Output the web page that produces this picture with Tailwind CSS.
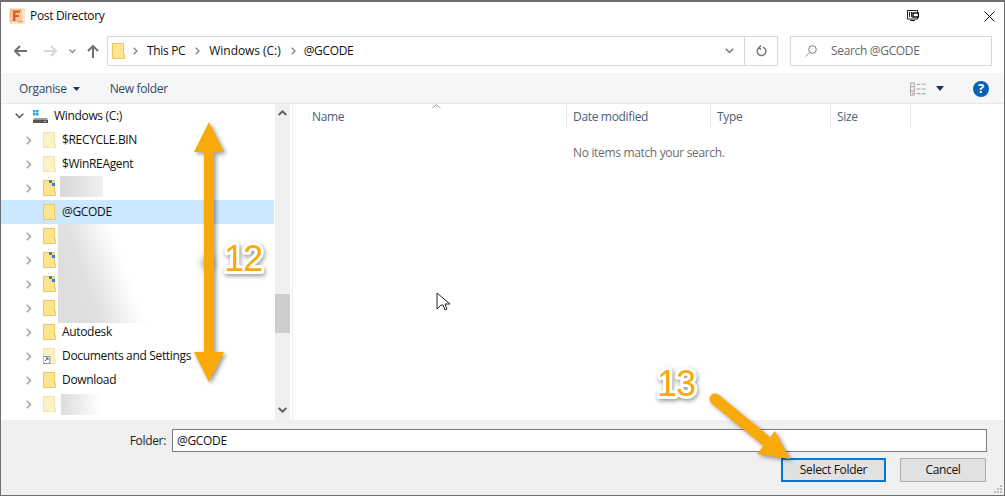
<!DOCTYPE html>
<html><head><meta charset="utf-8"><script src="https://cdn.jsdelivr.net/npm/@tailwindcss/browser@4"></script></head>
<body class="m-0 bg-white">
<div class="relative w-[1005px] h-[496px] overflow-hidden bg-white border border-t-2 border-[#6e6e6e] font-['Open_Sans',sans-serif] text-[12px] tracking-[-0.33px] text-[#111] flex flex-col">
  <!-- title -->
  <div class="h-[32px] shrink-0 flex items-center pl-[8px] pr-[9px] pb-[4px]">
    <svg width="16" height="16" viewBox="0 0 16 16"><rect width="16" height="16" fill="#fbe3cd"/><rect x="1" y="1" width="12" height="13" fill="#f6c39a"/><path d="M4 2.500h7v2.200H6.500v2.300h3.500v2H6.500v4H4z" fill="#d8651d"/><rect x="9" y="13" width="5" height="1.500" fill="#eea46c"/></svg>
    <span class="ml-[5px] text-[#111]">Post Directory</span>
    <svg class="ml-auto mr-[65px]" width="12" height="12" viewBox="0 0 12 12"><rect x="0.500" y="0.500" width="10" height="8.500" fill="none" stroke="#222"/><path d="M2.500 2v5M4.500 2v5" stroke="#222"/><rect x="6" y="3" width="5.500" height="4" fill="#fff" stroke="#000" stroke-width="1.400"/><path d="M3 10.500h5" stroke="#222"/></svg>
    <svg width="11" height="11" viewBox="0 0 11 11"><path d="M.5.500l10 10M10.500.500l-10 10" stroke="#111" stroke-width="1"/></svg>
  </div>
  <!-- nav -->
  <div class="h-[39px] shrink-0 flex items-start pt-[2px]">
    <div class="w-[106px] h-[30px] flex items-center">
      <svg class="ml-[13px]" width="13" height="12" viewBox="0 0 13 12"><path d="M6 1L1 6l5 5M1 6h12" fill="none" stroke="#6f6f6f" stroke-width="2"/></svg>
      <svg class="ml-[17px]" width="13" height="12" viewBox="0 0 13 12"><path d="M7 1l5 5-5 5M12 6H0" fill="none" stroke="#d8d8d8" stroke-width="2"/></svg>
      <svg class="ml-[12px]" width="7" height="5" viewBox="0 0 7 5"><path d="M.5.500l3 3 3-3" fill="none" stroke="#8a8a8a" stroke-width="1.300"/></svg>
      <svg class="ml-[11px]" width="12" height="13" viewBox="0 0 12 13"><path d="M1 6l5-5 5 5M6 1v12" fill="none" stroke="#6f6f6f" stroke-width="2"/></svg>
    </div>
    <div class="w-[671px] h-[30px] border border-[#d9d9d9] flex items-center">
      <svg class="ml-[4px]" width="13" height="16" viewBox="0 0 13 16"><path d="M.500.500h11v11h1v4H.500z" fill="#fde68f" stroke="#eec75b"/></svg>
      <svg class="ml-[8px]" width="5" height="8" viewBox="0 0 5 8"><path d="M.700.700L4 4 .700 7.300" fill="none" stroke="#808080" stroke-width="1.300"/></svg>
      <span class="ml-[9px]">This PC</span>
      <svg class="ml-[10px]" width="5" height="8" viewBox="0 0 5 8"><path d="M.700.700L4 4 .700 7.300" fill="none" stroke="#808080" stroke-width="1.300"/></svg>
      <span class="ml-[9px] tracking-[-0.05px]">Windows (C:)</span>
      <svg class="ml-[10px]" width="5" height="8" viewBox="0 0 5 8"><path d="M.700.700L4 4 .700 7.300" fill="none" stroke="#808080" stroke-width="1.300"/></svg>
      <span class="ml-[8px]">@GCODE</span>
      <svg class="ml-auto mr-[10px]" width="9" height="6" viewBox="0 0 9 6"><path d="M.700.700l3.800 3.800L8.300.700" fill="none" stroke="#777" stroke-width="1.500"/></svg>
      <div class="w-[33px] h-full border-l border-[#d9d9d9] flex items-center justify-center">
        <svg width="11" height="12" viewBox="0 0 11 12"><path d="M3.500 2.500A4.300 4.300 0 1 0 7 2.200M5 .500L3 2.500l2 2" fill="none" stroke="#777" stroke-width="1.500"/></svg>
      </div>
    </div>
    <div class="ml-[12px] w-[202px] h-[30px] border border-[#d9d9d9] flex items-center text-[#666]">
      <svg class="ml-[14px]" width="12" height="12" viewBox="0 0 12 12"><circle cx="7.500" cy="4.500" r="3.800" fill="none" stroke="#777"/><path d="M4.800 7.200L.500 11.500" stroke="#a88"/></svg>
      <span class="ml-[14px]">Search @GCODE</span>
    </div>
  </div>
  <!-- toolbar -->
  <div class="h-[30px] shrink-0 bg-[#f5f6f7] flex items-center pl-[18px] pt-px text-[#34475f]">
    <span>Organise</span>
    <svg class="ml-[6px]" width="7" height="4" viewBox="0 0 7 4"><path d="M0 0h7L3.500 4z" fill="#1d3557"/></svg>
    <span class="ml-[30px]">New folder</span>
    <svg class="ml-auto" width="16" height="14" viewBox="0 0 17 14"><path d="M.500.500h4v13h-4zM.500 4.500h4M.500 9h4" fill="none" stroke="#a0a0a0"/><path d="M7 2h4M12.500 2h4M7 7h4M12.500 7h4M7 12h4M12.500 12h4" stroke="#9a9a9a"/><rect x="2" y="11" width="1" height="1" fill="#d33"/></svg>
    <svg class="ml-[10px]" width="8" height="5" viewBox="0 0 8 5"><path d="M0 0h8L4 5z" fill="#1d3557"/></svg>
    <div class="ml-[29px] mr-[15px] w-[16px] h-[16px] rounded-full bg-[#0a62b8] text-white flex items-center justify-center text-[13px] font-bold">?</div>
  </div>
  <div class="h-px shrink-0 bg-[#e8e8e8]"></div>
  <!-- main -->
  <div class="h-[316px] shrink-0 flex">
    <div class="w-[273px] flex flex-col">
      <div class="h-6 flex items-center"><svg class="ml-[14px]" width="9" height="6" viewBox="0 0 9 6"><path d="M.700.700l3.800 3.800L8.300.700" fill="none" stroke="#555" stroke-width="1.500"/></svg>
        <svg class="ml-[9px]" width="15" height="14" viewBox="0 0 15 14"><path d="M0 1h2.500v2.500H0zM3 1h2.500v2.500H3zM0 4h2.500v2.500H0zM3 4h2.500v2.500H3z" fill="#19a9e8"/><path d="M1 9h13l1 2v3H0v-3z" fill="#9a9a9a"/><path d="M0 11h15v3H0z" fill="#555"/><rect x="11" y="12" width="2" height="1" fill="#7d7"/></svg>
        <span class="ml-[6px]">Windows (C:)</span></div>
      <div class="h-6 flex items-center"><svg class="ml-[25px]" width="6" height="9" viewBox="0 0 6 9"><path d="M.700.700l3.800 3.800L.700 8.300" fill="none" stroke="#a6a6a6" stroke-width="1.500"/></svg>
        <svg class="ml-[11px] opacity-50" width="13" height="16" viewBox="0 0 13 16"><path d="M.500.500h11v11h1v4H.500z" fill="#fde68f" stroke="#eec75b"/></svg>
        <span class="ml-[6px]">$RECYCLE.BIN</span></div>
      <div class="h-6 flex items-center"><svg class="ml-[25px]" width="6" height="9" viewBox="0 0 6 9"><path d="M.700.700l3.800 3.800L.700 8.300" fill="none" stroke="#a6a6a6" stroke-width="1.500"/></svg>
        <svg class="ml-[11px] opacity-50" width="13" height="16" viewBox="0 0 13 16"><path d="M.500.500h11v11h1v4H.500z" fill="#fde68f" stroke="#eec75b"/></svg>
        <span class="ml-[6px]">$WinREAgent</span></div>
      <div class="h-6 flex items-center"><svg class="ml-[25px]" width="6" height="9" viewBox="0 0 6 9"><path d="M.700.700l3.800 3.800L.700 8.300" fill="none" stroke="#a6a6a6" stroke-width="1.500"/></svg>
        <svg class="ml-[11px]" width="13" height="16" viewBox="0 0 13 16"><path d="M.500.500h11v11h1v4H.500z" fill="#fde68f" stroke="#eec75b"/><path d="M6 0h3v3H6zM9 3h3v3H9z" fill="#2f80c8"/></svg>
        <div class="ml-[4px] w-[43px] h-[21px] -mt-[4px] bg-linear-to-r from-[#d8d8d8] to-[#efefef]"></div></div>
      <div class="h-6 flex items-center bg-[#cce8ff]"><svg class="ml-[42px]" width="13" height="16" viewBox="0 0 13 16"><path d="M.500.500h11v11h1v4H.500z" fill="#fde68f" stroke="#eec75b"/></svg>
        <span class="ml-[6px]">@GCODE</span></div>
      <div class="relative h-6 flex items-center"><svg class="ml-[25px]" width="6" height="9" viewBox="0 0 6 9"><path d="M.700.700l3.800 3.800L.700 8.300" fill="none" stroke="#a6a6a6" stroke-width="1.500"/></svg>
        <svg class="ml-[11px]" width="13" height="16" viewBox="0 0 13 16"><path d="M.500.500h11v11h1v4H.500z" fill="#fde68f" stroke="#eec75b"/></svg></div>
      <div class="h-6 flex items-center"><svg class="ml-[25px]" width="6" height="9" viewBox="0 0 6 9"><path d="M.700.700l3.800 3.800L.700 8.300" fill="none" stroke="#a6a6a6" stroke-width="1.500"/></svg>
        <svg class="ml-[11px]" width="13" height="16" viewBox="0 0 13 16"><path d="M.500.500h11v11h1v4H.500z" fill="#fde68f" stroke="#eec75b"/><path d="M6 0h3v3H6zM9 3h3v3H9z" fill="#2f80c8"/></svg></div>
      <div class="h-6 flex items-center"><svg class="ml-[25px]" width="6" height="9" viewBox="0 0 6 9"><path d="M.700.700l3.800 3.800L.700 8.300" fill="none" stroke="#a6a6a6" stroke-width="1.500"/></svg>
        <svg class="ml-[11px]" width="13" height="16" viewBox="0 0 13 16"><path d="M.500.500h11v11h1v4H.500z" fill="#fde68f" stroke="#eec75b"/><path d="M6 0h3v3H6zM9 3h3v3H9z" fill="#2f80c8"/></svg></div>
      <div class="h-6 flex items-center"><svg class="ml-[25px]" width="6" height="9" viewBox="0 0 6 9"><path d="M.700.700l3.800 3.800L.700 8.300" fill="none" stroke="#a6a6a6" stroke-width="1.500"/></svg>
        <svg class="ml-[11px]" width="13" height="16" viewBox="0 0 13 16"><path d="M.500.500h11v11h1v4H.500z" fill="#fde68f" stroke="#eec75b"/></svg></div>
      <div class="h-6 flex items-center"><svg class="ml-[25px]" width="6" height="9" viewBox="0 0 6 9"><path d="M.700.700l3.800 3.800L.700 8.300" fill="none" stroke="#a6a6a6" stroke-width="1.500"/></svg>
        <svg class="ml-[11px]" width="13" height="16" viewBox="0 0 13 16"><path d="M.500.500h11v11h1v4H.500z" fill="#fde68f" stroke="#eec75b"/></svg>
        <span class="ml-[6px]">Autodesk</span></div>
      <div class="h-6 flex items-center"><svg class="ml-[25px]" width="6" height="9" viewBox="0 0 6 9"><path d="M.700.700l3.800 3.800L.700 8.300" fill="none" stroke="#a6a6a6" stroke-width="1.500"/></svg>
        <svg class="ml-[11px]" width="13" height="16" viewBox="0 0 13 16"><path d="M.500.500h11v11h1v4H.500z" fill="#fde68f" stroke="#eec75b" opacity=".5"/><rect x="-0" y="8.500" width="7" height="7" fill="#fff" stroke="#8d8d8d"/><path d="M2 13l3-3M3 10h2v2" stroke="#1f5fb0" fill="none"/></svg>
        <span class="ml-[6px]">Documents and Settings</span></div>
      <div class="h-6 flex items-center"><svg class="ml-[25px]" width="6" height="9" viewBox="0 0 6 9"><path d="M.700.700l3.800 3.800L.700 8.300" fill="none" stroke="#a6a6a6" stroke-width="1.500"/></svg>
        <svg class="ml-[11px]" width="13" height="16" viewBox="0 0 13 16"><path d="M.500.500h11v11h1v4H.500z" fill="#fde68f" stroke="#eec75b"/></svg>
        <span class="ml-[6px]">Download</span></div>
      <div class="h-6 flex items-center"><svg class="ml-[25px]" width="6" height="9" viewBox="0 0 6 9"><path d="M.700.700l3.800 3.800L.700 8.300" fill="none" stroke="#a6a6a6" stroke-width="1.500"/></svg>
        <svg class="ml-[11px] opacity-50" width="13" height="16" viewBox="0 0 13 16"><path d="M.500.500h11v11h1v4H.500z" fill="#fde68f" stroke="#eec75b"/></svg>
        <div class="ml-[5px] w-[39px] h-[21px] bg-linear-to-r from-[#dcdcdc] to-white"></div></div>
    </div>
    <!-- scrollbar -->
    <div class="w-[15px] ml-px bg-[#f0f0f0] flex flex-col items-center">
      <svg class="mt-[6px]" width="9" height="6" viewBox="0 0 9 6"><path d="M.700 5L4.500 1.300 8.300 5" fill="none" stroke="#5a5a5a" stroke-width="1.800"/></svg>
      <div class="mt-[178px] w-full h-[39px] bg-[#cdcdcd]"></div>
      <svg class="mt-[74px]" width="9" height="6" viewBox="0 0 9 6"><path d="M.700 1L4.500 4.700 8.300 1" fill="none" stroke="#5a5a5a" stroke-width="1.800"/></svg>
    </div>
    <!-- list -->
    <div class="ml-[2px] flex-1 border-l border-[#f0f0f0]">
      <div class="relative h-[24px] flex items-center text-[#4c607a]">
        <div class="w-[274px] h-full pl-[19px] pt-[2px] flex items-center border-r border-[#e5e5e5]">Name</div>
        <div class="w-[144px] h-full pl-[6px] pt-[2px] flex items-center border-r border-[#e5e5e5]">Date modified</div>
        <div class="w-[120px] h-full pl-[6px] pt-[2px] flex items-center border-r border-[#e5e5e5]">Type</div>
        <div class="w-[80px] h-full pl-[6px] pt-[2px] flex items-center border-r border-[#e5e5e5]">Size</div>
        <svg class="absolute left-[139px] top-0" width="9" height="5" viewBox="0 0 9 5"><path d="M.500 4L4.500 .700 8.500 4" fill="none" stroke="#9a9a9a"/></svg>
      </div>
      <div class="mt-[16px] pl-[280px] text-[#6d6d6d]">No items match your search.</div>
    </div>
  </div>
  <!-- bottom -->
  <div class="flex-1 bg-[#f0f0f0] relative pt-[9px]">
    <div class="flex items-center h-[23px]">
      <span class="w-[165px] text-right text-[#222]">Folder:</span>
      <div class="ml-[6px] w-[815px] h-[23px] bg-white border border-[#7a7a7a] pl-[4px] flex items-center">@GCODE</div>
    </div>
    <div class="flex justify-end mt-[6px] mr-[18px] gap-[14px]">
      <div class="w-[105px] h-[24px] bg-[#e1e1e1] border-2 border-[#0078d7] flex items-center justify-center">Select Folder</div>
      <div class="w-[86px] h-[24px] bg-[#e1e1e1] border border-[#adadad] flex items-center justify-center">Cancel</div>
    </div>
    <svg class="absolute right-[1px] bottom-[1px]" width="10" height="10" viewBox="0 0 10 10"><path d="M7 1h2v2H7zM4 4h2v2H4zM7 4h2v2H7zM1 7h2v2H1zM4 7h2v2H4zM7 7h2v2H7z" fill="#bcbcbc"/></svg>
  </div>
  <!-- redaction blurs -->
  <div class="absolute left-[57px] top-[222px] w-[88px] h-[99px] bg-[linear-gradient(70deg,#dcdcdc_0%,#e0e0e0_35%,#fff_71%)]"></div>
  <div class="absolute left-[200px] top-[253px] w-[14px] h-[16px] rounded-full blur-[3px] bg-[#bdbdbd]"></div>
  <!-- annotations -->
  <svg class="absolute left-[-1px] top-[-2px] drop-shadow-[2px_2px_2px_rgba(0,0,0,0.4)]" width="1005" height="496" viewBox="0 0 1005 496">
    <path d="M209 122L224 152H214V352H224L209 382L194 352H204V152H194z" fill="#f9a90a"/>
    <path d="M715 399L766 441" stroke="#f9a90a" stroke-width="11" stroke-linecap="round"/>
    <path d="M790 459L757 454L775 431z" fill="#f9a90a"/>
  </svg>
  <svg class="absolute left-[-1px] top-[-2px] font-['Liberation_Sans',sans-serif]" width="1005" height="496" viewBox="0 0 1005 496">
    <g class="drop-shadow-[1px_2px_2px_rgba(0,0,0,0.4)]">
      <text x="224" y="271" font-size="36" letter-spacing="-1" fill="#f9a90a" stroke="#fff" stroke-width="6" paint-order="stroke" stroke-linejoin="round">12</text>
      <text x="657" y="396" font-size="36" letter-spacing="-1" fill="#f9a90a" stroke="#fff" stroke-width="6" paint-order="stroke" stroke-linejoin="round">13</text>
    </g>
    <path d="M437 293v16l4-4h2l2 5 2-1-2-5h5z" fill="#fff" stroke="#222"/>
  </svg>
</div>
</body></html>
